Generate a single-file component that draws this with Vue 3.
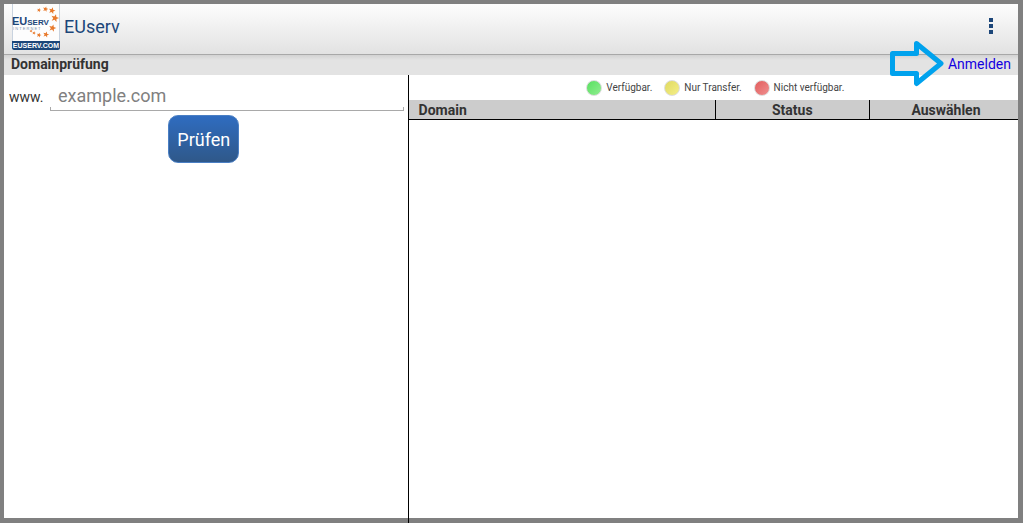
<template>
  <div class="screen">
    <header class="action-bar">
      <svg class="logo" viewBox="0 0 48 46" role="img" aria-label="EUserv.com">
        <rect width="48" height="46" fill="#fdfdfd" />
        <path d="M.5 0V37M47.500 0V37" stroke="#c9d3df" />
        <g fill="#e8792b">
          <polygon
            v-for="(star, i) in stars"
            :key="i"
            points="0,-3 .8,-1 3,-.9 1.300,.5 1.900,2.700 0,1.400 -1.900,2.700 -1.300,.5 -3,-.9 -.8,-1"
            :transform="`translate(${star.x} ${star.y}) rotate(15) scale(${star.s})`"
          />
        </g>
        <text class="logo-name">
          <tspan x="0" y="21" font-size="11">EU</tspan><tspan font-size="8">SERV</tspan>
          <tspan x="1" y="26" class="logo-sub" font-size="4">I N T E R N E T</tspan>
        </text>
        <path d="M0 37H48V44Q48 46 46 46H2Q0 46 0 44Z" fill="#1c4679" />
        <text x="24" y="44" class="logo-com" font-size="7" text-anchor="middle">EUSERV.COM</text>
      </svg>
      <h1 class="title">EUserv</h1>
      <button class="overflow" type="button" aria-label="Menü">
        <span></span>
        <span></span>
        <span></span>
      </button>
    </header>

    <div class="sub-bar">
      <h2>Domainprüfung</h2>
      <div class="login">
        <svg class="arrow" viewBox="0 0 54 46" aria-hidden="true">
          <path d="M2.500 12.500H26.500V2.500L51 22.500L26.500 42.500V32.500H2.500Z" />
        </svg>
        <a href="#">Anmelden</a>
      </div>
    </div>

    <main class="content">
      <form class="search" @submit.prevent>
        <div class="field">
          <label for="domain">www.</label>
          <div class="input-wrap">
            <input id="domain" v-model="domain" type="text" placeholder="example.com" />
          </div>
        </div>
        <div class="actions">
          <button class="check" type="submit">Prüfen</button>
        </div>
      </form>

      <section class="results">
        <ul class="legend">
          <li v-for="item in legend" :key="item.color">
            <span class="dot" :class="item.color"></span>
            {{ item.text }}
          </li>
        </ul>
        <table>
          <thead>
            <tr>
              <th class="col-domain">Domain</th>
              <th class="col-status">Status</th>
              <th class="col-select">Auswählen</th>
            </tr>
          </thead>
        </table>
      </section>
    </main>
  </div>
</template>

<script setup>
import { ref } from 'vue';

const domain = ref('');

const legend = [
  { color: 'green', text: 'Verfügbar.' },
  { color: 'yellow', text: 'Nur Transfer.' },
  { color: 'red', text: 'Nicht verfügbar.' },
];

// Sternenkreis im Logo
const stars = [
  { x: 27, y: 6, s: 0.7 },
  { x: 33.5, y: 5, s: 0.9 },
  { x: 40, y: 6.5, s: 1.1 },
  { x: 43, y: 14, s: 1.3 },
  { x: 40.5, y: 24, s: 1.2 },
  { x: 34, y: 30.5, s: 1 },
  { x: 27, y: 31, s: 0.8 },
  { x: 22, y: 29, s: 0.6 },
  { x: 19, y: 27, s: 0.5 },
];
</script>

<style>
body {
  margin: 0;
  background: #fff;
}
</style>

<style scoped>
.screen {
  box-sizing: border-box;
  min-height: calc(100vh - 1px);
  display: flex;
  flex-direction: column;
  border: 4px solid #808080;
  border-right-width: 5px;
  border-bottom-width: 5px;
  background: #fff;
  color: #333;
  font-family: Roboto, "Liberation Sans", sans-serif;
  font-size: 14px;
}

.action-bar {
  display: flex;
  align-items: center;
  height: 50px;
  padding: 0 20px 0 8px;
  background: linear-gradient(#fdfdfd, #e2e2e2);
  border-bottom: 1px solid #a8a8a8;
}

.logo {
  width: 48px;
  height: 46px;
  margin-bottom: 4px;
}

.logo-name {
  fill: #1c4679;
  font-family: "Liberation Sans", sans-serif;
  font-weight: bold;
}

.logo-sub {
  fill: #7d93b0;
  font-weight: normal;
}

.logo-com {
  fill: #fff;
  font-family: "Liberation Sans", sans-serif;
  font-weight: bold;
}

.title {
  flex: 1;
  margin: 0 0 4px 4px;
  color: #1c4679;
  font-size: 18px;
  line-height: 22px;
  font-weight: 400;
}

.overflow {
  display: flex;
  flex-direction: column;
  align-items: center;
  gap: 2px;
  width: 14px;
  margin-bottom: 6px;
  padding: 0;
  border: none;
  background: none;
}

.overflow span {
  width: 4px;
  height: 4px;
  background: #1c4679;
}

.sub-bar {
  display: flex;
  align-items: flex-start;
  justify-content: space-between;
  height: 20px;
  padding: 0 7px;
  background: linear-gradient(#d2d2d2, #e3e3e3 5px);
}

.sub-bar h2 {
  margin: 0;
  font-size: 14px;
  line-height: 18px;
  font-weight: 700;
}

.login {
  position: relative;
  line-height: 18px;
}

.login a {
  color: #1400e0;
  text-decoration: none;
}

/* Pfeil liegt über der Leiste und zeigt auf den Link */
.arrow {
  position: absolute;
  right: 100%;
  top: -14px;
  width: 54px;
  height: 46px;
  margin-right: 4px;
}

.arrow path {
  fill: none;
  stroke: #00a2ed;
  stroke-width: 5;
  stroke-linejoin: round;
}

.content {
  flex: 1;
  display: grid;
  grid-template-columns: calc(40% - 1px) 1fr;
}

.search {
  position: relative;
  padding: 8px 5px 0;
}

/* Trennlinie läuft bis zum unteren Fensterrand */
.search::after {
  content: '';
  position: absolute;
  top: 0;
  right: 0;
  bottom: -6px;
  width: 1px;
  background: #000;
}

.field {
  display: flex;
  align-items: center;
  gap: 4px;
}

.field label {
  width: 37px;
}

.input-wrap {
  position: relative;
  flex: 1;
  height: 27px;
  border-bottom: 1px solid #a9a9a9;
}

.input-wrap::after {
  content: '';
  position: absolute;
  left: 0;
  right: 0;
  bottom: 0;
  height: 3px;
  border: solid #a9a9a9;
  border-width: 0 1px;
  pointer-events: none;
}

input {
  box-sizing: border-box;
  display: block;
  width: 100%;
  height: 24px;
  padding: 0 8px;
  border: none;
  outline: none;
  background: none;
  color: #333;
  font: 18px Roboto, "Liberation Sans", sans-serif;
}

input::placeholder {
  color: #808080;
  opacity: 1;
}

.actions {
  display: flex;
  justify-content: center;
  padding: 4px 5px 0 0;
}

.check {
  width: 71px;
  height: 48px;
  padding: 0;
  border: 1px solid #4a7fc4;
  border-radius: 10px;
  background: linear-gradient(#2f6cc0, #2f5889);
  color: #fff;
  font: 18px Roboto, "Liberation Sans", sans-serif;
}

.legend {
  display: flex;
  align-items: center;
  justify-content: center;
  gap: 12px;
  height: 25px;
  margin: 0;
  padding: 0 0 0 4px;
  list-style: none;
  color: #444;
  font-size: 10px;
}

.legend li {
  display: flex;
  align-items: center;
  gap: 4px;
}

.dot {
  box-sizing: border-box;
  width: 16px;
  height: 16px;
  border: 1px solid #ddd;
  border-radius: 50%;
}

.green {
  background: linear-gradient(135deg, #58e060, #90ee90);
}

.yellow {
  background: linear-gradient(135deg, #e0da60, #f4ee88);
}

.red {
  background: linear-gradient(135deg, #e25c5c, #f09090);
}

table {
  width: 100%;
  table-layout: fixed;
  border-collapse: separate;
  border-spacing: 0;
}

th {
  box-sizing: border-box;
  height: 20px;
  padding: 2px 0 0;
  border-right: 1px solid #000;
  border-bottom: 1px solid #000;
  background: #ccc;
  font-weight: 700;
  line-height: 17px;
}

.col-domain {
  width: 50.400%;
  padding-left: 10px;
  text-align: left;
}

.col-status {
  width: 25.300%;
}

.col-select {
  padding-left: 4px;
  border-right: none;
}
</style>
